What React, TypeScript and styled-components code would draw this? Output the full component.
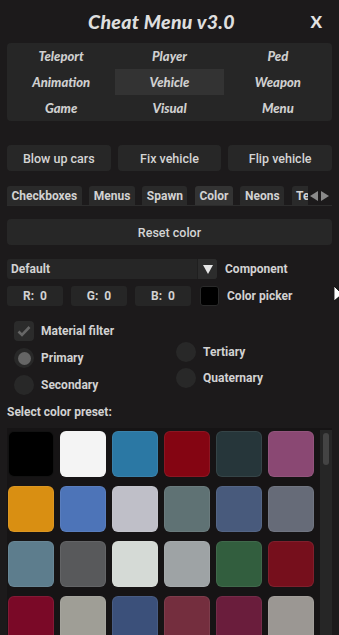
import React from 'react'
import styled, { createGlobalStyle } from 'styled-components';

const GlobalStyle = createGlobalStyle`
    html, body {
        margin: 0;
        padding: 0;
        background: #1c1a1b;
    }
    * {
        box-sizing: border-box;
    }
`;

const Window = styled.div`
    position: relative;
    width: 339px;
    height: 635px;
    overflow: hidden;
    background: #1c1a1b;
    padding: 0 7px;
    display: flex;
    flex-direction: column;
    font-family: Roboto, "Liberation Sans", sans-serif;
    font-weight: 700;
    font-size: 12px;
    color: #d2d2d2;
`;

const TitleBar = styled.div`
    height: 43px;
    display: grid;
    grid-template-columns: 1fr auto 1fr;
    align-items: center;
    flex-shrink: 0;
`;

const Title = styled.div`
    grid-column: 2;
    padding-right: 16px;
    font-family: Lato, "Open Sans", sans-serif;
    font-style: italic;
    font-weight: 900;
    font-size: 19.5px;
    letter-spacing: 0.3px;
    color: #dedede;
`;

const CloseButton = styled.div`
    grid-column: 3;
    justify-self: end;
    padding-right: 10px;
    font-family: Lato, "Open Sans", sans-serif;
    font-weight: 900;
    font-size: 17px;
    color: #e2e2e2;
`;

const MainTabs = styled.div`
    display: grid;
    grid-template-columns: repeat(3, 1fr);
    grid-auto-rows: 26px;
    background: #262626;
    border-radius: 4px;
    flex-shrink: 0;
`;

const MainTab = styled.div<{ $active?: boolean }>`
    display: flex;
    align-items: center;
    justify-content: center;
    font-family: Lato, "Open Sans", sans-serif;
    font-style: italic;
    font-weight: 900;
    font-size: 13px;
    color: #cfcfcf;
    background: ${p => p.$active ? '#333333' : 'transparent'};
`;

const ActionRow = styled.div`
    margin-top: 24px;
    display: grid;
    grid-template-columns: repeat(3, 1fr);
    gap: 7px;
    flex-shrink: 0;
`;

const Button = styled.div`
    height: 26px;
    display: flex;
    align-items: center;
    justify-content: center;
    background: #272727;
    border-radius: 4px;
    font-weight: 500;
    font-size: 12.5px;
    color: #d4d4d4;
`;

const SubTabBar = styled.div`
    margin-top: 15px;
    display: flex;
    align-items: flex-end;
    height: 20px;
    border-bottom: 1px solid #2c2c2c;
    flex-shrink: 0;
`;

const SubTabStrip = styled.div`
    flex: 1;
    display: flex;
    gap: 7.5px;
    overflow: hidden;
    white-space: nowrap;
`;

const SubTab = styled.div<{ $active?: boolean }>`
    height: 19px;
    padding: 0 4.5px;
    display: flex;
    align-items: center;
    border-radius: 3px 3px 0 0;
    background: ${p => p.$active ? '#333333' : '#2a2a2a'};
    font-size: 12px;
    color: #d2d2d2;
    flex-shrink: 0;
`;

const Arrows = styled.div`
    width: 24px;
    height: 19px;
    display: flex;
    align-items: center;
    justify-content: center;
    gap: 2px;
    flex-shrink: 0;
`;

const ResetButton = styled(Button)`
    margin-top: 13px;
    flex-shrink: 0;
`;

const FieldRow = styled.div<{ $top: number }>`
    margin-top: ${p => p.$top}px;
    display: flex;
    align-items: center;
    height: 20px;
    flex-shrink: 0;
`;

const Select = styled.div`
    width: 210px;
    height: 20px;
    display: flex;
    background: #262626;
    border-radius: 3px;
    overflow: hidden;
`;

const SelectValue = styled.div`
    flex: 1;
    display: flex;
    align-items: center;
    padding-left: 4px;
`;

const SelectArrow = styled.div`
    width: 20px;
    display: flex;
    align-items: center;
    justify-content: center;
    background: #2c2c2c;
    border-left: 1px solid #1f1f1f;
`;

const FieldLabel = styled.div`
    margin-left: 8px;
    font-size: 12px;
    color: #d2d2d2;
`;

const RgbGroup = styled.div`
    display: flex;
    gap: 8px;
    margin-right: 9px;
`;

const RgbInput = styled.div`
    width: 56px;
    height: 20px;
    display: flex;
    align-items: center;
    justify-content: center;
    gap: 6px;
    background: #262626;
    border-radius: 3px;
`;

const ColorSwatch = styled.div<{ $color: string }>`
    width: 19px;
    height: 20px;
    border-radius: 3px;
    background: ${p => p.$color};
    border: 1px solid #2a2a2a;
`;

const Options = styled.div`
    margin-top: 15px;
    display: grid;
    grid-template-columns: 162px 1fr;
    padding-left: 7px;
    flex-shrink: 0;
`;

const OptionColumn = styled.div<{ $top: number; $gap: number }>`
    display: flex;
    flex-direction: column;
    gap: ${p => p.$gap}px;
    padding-top: ${p => p.$top}px;
`;

const Option = styled.div`
    display: flex;
    align-items: center;
    gap: 7px;
    height: 20px;
`;

const CheckBox = styled.div`
    width: 20px;
    height: 20px;
    border-radius: 4px;
    background: #2b2b2b;
    display: flex;
    align-items: center;
    justify-content: center;
`;

const Radio = styled.div<{ $checked?: boolean }>`
    width: 20px;
    height: 20px;
    border-radius: 50%;
    background: #282828;
    display: flex;
    align-items: center;
    justify-content: center;

    &::after {
        content: '';
        width: 13px;
        height: 13px;
        border-radius: 50%;
        background: ${p => p.$checked ? '#656565' : 'transparent'};
    }
`;

const SectionLabel = styled.div`
    margin-top: 10px;
    font-size: 12px;
    flex-shrink: 0;
`;

const PresetArea = styled.div`
    margin-top: 9px;
    flex: 1;
    display: flex;
    background: #161415;
    min-height: 0;
`;

const PresetGrid = styled.div`
    flex: 1;
    display: grid;
    grid-template-columns: repeat(6, 46px);
    grid-auto-rows: 46px;
    column-gap: 6px;
    row-gap: 9px;
    padding: 3px 0 0 1px;
    align-content: start;
`;

const Preset = styled.div<{ $color: string }>`
    background: ${p => p.$color};
    border-radius: 6px;
    border: 1px solid rgba(255, 255, 255, 0.07);
`;

const ScrollTrack = styled.div`
    width: 12px;
    background: #262626;
    padding: 3px;
    margin-top: 2px;
`;

const ScrollThumb = styled.div`
    height: 32px;
    border-radius: 3px;
    background: #444444;
`;

const Cursor = styled.svg`
    position: absolute;
    left: 334px;
    top: 286px;
`;

const mainTabs = ['Teleport', 'Player', 'Ped', 'Animation', 'Vehicle', 'Weapon', 'Game', 'Visual', 'Menu'];
const subTabs = ['Checkboxes', 'Menus', 'Spawn', 'Color', 'Neons', 'Textures'];

const presets = [
    '#000000', '#f4f4f4', '#2b78a4', '#840512', '#26363a', '#8a4873',
    '#d98f12', '#4d74b8', '#bfbfc8', '#5f7274', '#485a7c', '#666b78',
    '#5d7d8d', '#58595b', '#d5dad6', '#9ea3a5', '#325e3e', '#760f1c',
    '#7a0927', '#9f9e96', '#3b507a', '#742e3e', '#6a1d3c', '#9b9793',
];

const App: React.FC = () => (
    <>
        <GlobalStyle />
        <Window>
            <TitleBar>
                <Title>Cheat Menu v3.0</Title>
                <CloseButton>X</CloseButton>
            </TitleBar>
            <MainTabs>
                {mainTabs.map(t => <MainTab key={t} $active={t === 'Vehicle'}>{t}</MainTab>)}
            </MainTabs>
            <ActionRow>
                <Button>Blow up cars</Button>
                <Button>Fix vehicle</Button>
                <Button>Flip vehicle</Button>
            </ActionRow>
            <SubTabBar>
                <SubTabStrip>
                    {subTabs.map(t => <SubTab key={t} $active={t === 'Color'}>{t}</SubTab>)}
                </SubTabStrip>
                <Arrows>
                    <svg width="9" height="10" viewBox="0 0 9 10"><polygon points="8,0 8,10 0,5" fill="#8a8a8a" /></svg>
                    <svg width="9" height="10" viewBox="0 0 9 10"><polygon points="0,0 0,10 8,5" fill="#8a8a8a" /></svg>
                </Arrows>
            </SubTabBar>
            <ResetButton>Reset color</ResetButton>
            <FieldRow $top={14}>
                <Select>
                    <SelectValue>Default</SelectValue>
                    <SelectArrow>
                        <svg width="10" height="9" viewBox="0 0 10 9"><polygon points="0,0 10,0 5,9" fill="#e6e6e6" /></svg>
                    </SelectArrow>
                </Select>
                <FieldLabel>Component</FieldLabel>
            </FieldRow>
            <FieldRow $top={7}>
                <RgbGroup>
                    <RgbInput><span>R:</span><span>0</span></RgbInput>
                    <RgbInput><span>G:</span><span>0</span></RgbInput>
                    <RgbInput><span>B:</span><span>0</span></RgbInput>
                </RgbGroup>
                <ColorSwatch $color="#000000" />
                <FieldLabel>Color picker</FieldLabel>
            </FieldRow>
            <Options>
                <OptionColumn $top={0} $gap={7}>
                    <Option>
                        <CheckBox>
                            <svg width="14" height="12" viewBox="0 0 14 12">
                                <polyline points="1.5,6.5 5,10 12.5,2" fill="none" stroke="#666666" strokeWidth="2.6" />
                            </svg>
                        </CheckBox>
                        Material filter
                    </Option>
                    <Option><Radio $checked />Primary</Option>
                    <Option><Radio />Secondary</Option>
                </OptionColumn>
                <OptionColumn $top={21} $gap={6}>
                    <Option><Radio />Tertiary</Option>
                    <Option><Radio />Quaternary</Option>
                </OptionColumn>
            </Options>
            <SectionLabel>Select color preset:</SectionLabel>
            <PresetArea>
                <PresetGrid>
                    {presets.map((c, i) => <Preset key={i} $color={c} />)}
                </PresetGrid>
                <ScrollTrack><ScrollThumb /></ScrollTrack>
            </PresetArea>
            <Cursor width="6" height="16" viewBox="0 0 6 16">
                <polygon points="0,0 6,6 6,10 0,15" fill="#ffffff" stroke="#000" strokeWidth="0.8" />
            </Cursor>
        </Window>
    </>
);

export default App;
